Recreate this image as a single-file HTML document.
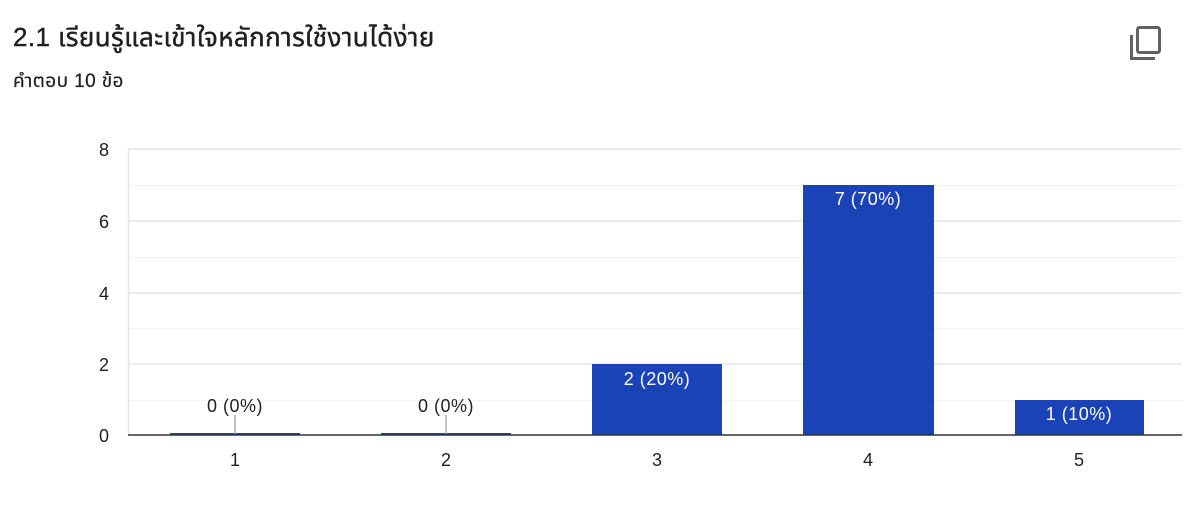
<!DOCTYPE html>
<html><head><meta charset="utf-8"><style>
html,body{margin:0;padding:0;background:#fff;width:1186px;height:526px;overflow:hidden}
.t{position:absolute;left:13px;top:18px;font:400 26px "Liberation Sans","Noto Sans Thai","Noto Sans CJK SC",sans-serif;color:#202124;white-space:nowrap;letter-spacing:0.4px;-webkit-text-stroke:0.4px #202124}
.s{position:absolute;left:13px;top:67px;font:400 19px "Liberation Sans","Noto Sans Thai",sans-serif;color:#202124;white-space:nowrap;letter-spacing:0.4px;-webkit-text-stroke:0.2px #202124}
svg{position:absolute;left:0;top:0}
</style></head><body>
<div class="t">2.1 เรียนรู้และเข้าใจหลักการใช้งานได้ง่าย</div>
<div class="s">คำตอบ 10 ข้อ</div>
<svg width="1186" height="526" font-family="Liberation Sans, Arial, sans-serif">
<g fill="none" stroke="#5f6368" stroke-width="3">
<rect x="1137.5" y="27.5" width="22" height="25" rx="2"/>
<path d="M1131.5 35V58.5H1155"/>
</g>
<g stroke="#f3f3f3" stroke-width="1">
<line x1="128" y1="185.5" x2="1182" y2="185.5"/>
<line x1="128" y1="257.5" x2="1182" y2="257.5"/>
<line x1="128" y1="328.5" x2="1182" y2="328.5"/>
<line x1="128" y1="400.5" x2="1182" y2="400.5"/>
</g>
<g stroke="#e6e6e6" stroke-width="1.5">
<line x1="128" y1="149" x2="1182" y2="149"/>
<line x1="128" y1="221" x2="1182" y2="221"/>
<line x1="128" y1="293" x2="1182" y2="293"/>
<line x1="128" y1="364" x2="1182" y2="364"/>
<line x1="128.5" y1="149" x2="128.5" y2="435"/>
</g>
<g fill="#1a43b8">
<rect x="592" y="364" width="130" height="71"/>
<rect x="803" y="185" width="131" height="250"/>
<rect x="1015" y="400" width="129" height="35"/>
<rect x="170" y="433" width="130" height="2"/>
<rect x="381" y="433" width="130" height="2"/>
</g>
<line x1="128" y1="435" x2="1182" y2="435" stroke="#333" stroke-width="1.5"/>
<g stroke="#aaa" stroke-width="1.5"><line x1="235" y1="415" x2="235" y2="434"/><line x1="446" y1="415" x2="446" y2="434"/></g>
<g font-size="18" fill="#222" text-anchor="end">
<text x="109" y="156">8</text><text x="109" y="228">6</text><text x="109" y="300">4</text><text x="109" y="371">2</text><text x="109" y="442">0</text>
</g>
<g font-size="18" fill="#222" text-anchor="middle">
<text x="235" y="466">1</text><text x="446" y="466">2</text><text x="657" y="466">3</text><text x="868" y="466">4</text><text x="1079" y="466">5</text>
<text x="235" y="412" letter-spacing="0.5">0 (0%)</text><text x="446" y="412" letter-spacing="0.5">0 (0%)</text>
</g>
<g font-size="18" fill="#fff" text-anchor="middle" letter-spacing="0.5">
<text x="657" y="385">2 (20%)</text><text x="868" y="205">7 (70%)</text><text x="1079" y="420">1 (10%)</text>
</g>
</svg>
</body></html>
